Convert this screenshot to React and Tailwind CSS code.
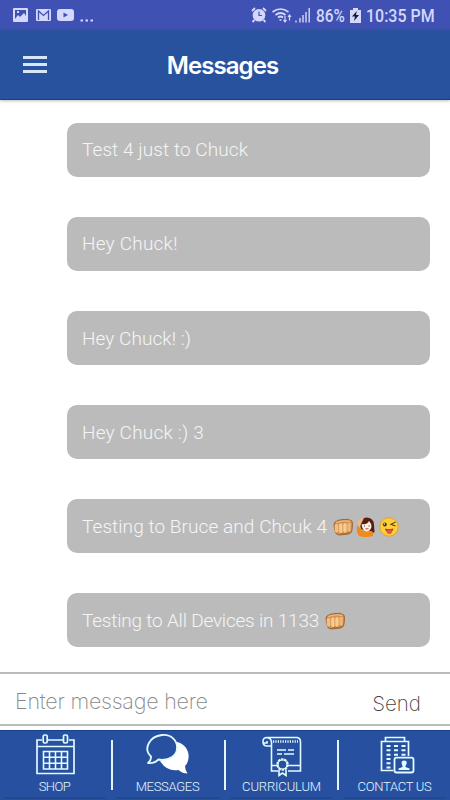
const messages = [
  { text: "Test 4 just to Chuck", tracking: "tracking-[0.08px]" },
  { text: "Hey Chuck!", tracking: "tracking-[0.22px]" },
  { text: "Hey Chuck! :)", tracking: "tracking-[0.06px]" },
  { text: "Hey Chuck :) 3", tracking: "tracking-[0.2px]" },
  { text: "Testing to Bruce and Chcuk 4", tracking: "tracking-[0.07px]", emojis: ["fist", "hand", "wink"] },
  { text: "Testing to All Devices in 1133", tracking: "tracking-[-0.2px]", emojis: ["fist"] },
];

function FistEmoji() {
  return (
    <svg className="h-[22px] w-[22px]" viewBox="0 0 22 22">
      <path d="M2 9Q2 5.500 5 5Q7 3.500 9 4Q11 3 13 3.700Q16 2.500 17.500 4Q20.500 4 20.500 7.500L20 14Q19.500 17.500 16.500 18L7 19Q4 19 3 15Z" fill="#d19354" stroke="#96592a" strokeWidth=".9" />
      <rect x="2.700" y="8" width="3.600" height="8.500" rx="1.700" fill="#f3c081" />
      <rect x="7.100" y="7.300" width="3.400" height="9.700" rx="1.700" fill="#f7ca8d" />
      <rect x="11.300" y="7" width="3.400" height="9.800" rx="1.700" fill="#f7ca8d" />
      <rect x="15.500" y="6.700" width="3.200" height="9" rx="1.600" fill="#f0b978" />
      <path d="M4 6.700Q11 4 18.500 5.500" fill="none" stroke="#efb87a" strokeWidth="1.300" />
      <path d="M8 17.800Q14 18 18 16" fill="none" stroke="#a96c33" strokeWidth=".8" />
    </svg>
  );
}

function HandEmoji() {
  return (
    <svg className="h-[22px] w-[22px]" viewBox="0 0 22 22">
      <path d="M5 8Q5 1.500 12 1.500Q19 2 19 9L19.500 16Q17 18 14 16L6 13Z" fill="#571c13" />
      <path d="M2 9L5 12L8 15L17 15Q19 17 18 20Q11 22 4 20Q1 16 2 9Z" fill="#f28a16" />
      <path d="M6.500 8Q12 9 14 5Q17 8 16.500 11Q15 15.500 11.500 15.500Q7 14.500 6.500 8Z" fill="#fff0df" />
      <path d="M3 5Q5 2 9 2L7 6L5 10L2.500 9Z" fill="#efb886" />
      <path d="M9 10h1M13.500 10h1" stroke="#35201b" strokeWidth="1.200" />
      <path d="M10.500 12.800h3" stroke="#c43d35" strokeWidth="1" />
    </svg>
  );
}

function WinkEmoji() {
  return (
    <svg className="h-[22px] w-[22px]" viewBox="0 0 22 22">
      <circle cx="11" cy="11" r="9.200" fill="#fdd03a" stroke="#e79b1c" strokeWidth=".9" />
      <circle cx="6.800" cy="8.500" r="2" fill="#503214" />
      <circle cx="6.300" cy="8" r=".7" fill="#fff" />
      <path d="M17.500 6L13 8.300L17.500 10" fill="none" stroke="#654018" strokeWidth="1.100" />
      <path d="M7 12.500Q11 14 15.500 12.500Q15 16 11 16Q7.500 16 7 12.500Z" fill="#a5381f" />
      <path d="M8.800 13.800h5v3q-2.500 2.500-5 0Z" fill="#ef4b4b" />
    </svg>
  );
}

const emojiIcons = { fist: FistEmoji, hand: HandEmoji, wink: WinkEmoji };

function StatusBar() {
  return (
    <div className="flex h-[30px] shrink-0 items-center justify-between bg-[#4051b4] pl-[13px] pr-[14px] text-[#d3d8fc]">
      <div className="flex items-center">
        <svg className="h-4 w-[15px]" viewBox="0 0 15 16">
          <path fillRule="evenodd" fill="currentColor" d="M1 1h13q1 0 1 1v12q0 1-1 1H1q-1 0-1-1V2q0-1 1-1ZM2 3v9l3-4 2 2 4-4 2 3V3ZM4 4h2v2H4Z" />
        </svg>
        <svg className="ml-2 h-4 w-[15px]" viewBox="0 0 15 16">
          <rect y="2" width="15" height="12" rx="1" fill="currentColor" />
          <path d="M2.500 13V4l5 4.500 5-4.500v9" fill="none" stroke="#4051b4" strokeWidth="1.300" />
        </svg>
        <svg className="ml-[6px] h-4 w-[17px]" viewBox="0 0 17 16">
          <rect y="2" width="17" height="12" rx="3" fill="currentColor" />
          <path d="M6.500 5.500v5L11 8Z" fill="#4051b4" />
        </svg>
        <svg className="ml-[6px] h-4 w-[15px]" viewBox="0 0 15 16">
          <path d="M.5 13.500h2.500M5.500 13.500h2.500M10.500 13.500h2.500" stroke="currentColor" strokeWidth="2.200" />
        </svg>
      </div>
      <div className="flex items-center">
        <svg className="h-4 w-4" viewBox="0 0 16 16">
          <circle cx="8" cy="8.300" r="6.300" fill="currentColor" />
          <path d="M1 4l3-3M12 1l3 3M3.500 13l-2 2M12.500 13l2 2" stroke="currentColor" strokeWidth="1.800" />
          <path d="M8 4.500V8.500h3" fill="none" stroke="#4051b4" strokeWidth="1.200" />
        </svg>
        <svg className="ml-[5px] h-4 w-[21px]" viewBox="0 0 20 16" fill="none" stroke="currentColor" strokeWidth="1.700">
          <path d="M0 5Q8-1 16 5M3 8Q8 4 13 8M5.500 10.500Q8 8.500 10.500 10.500M7 13h2" />
          <path d="M12.500 9v6M11 13l1.500 2 1.500-2M17 13.500V8M15.500 10L17 8l1.500 2" strokeWidth="1.200" />
        </svg>
        <svg className="ml-[2px] h-4 w-[15px]" viewBox="0 0 15 16" stroke="currentColor" strokeWidth="1.400">
          <path d="M1 13.500v2M5 11v4.500M8 8v7.500M11 5v10.500M14.200 1v14.500" />
        </svg>
        <span className="ml-[6px] w-[30px] origin-left scale-x-[0.81] pt-px text-[19px] leading-[30px] font-medium whitespace-nowrap">86%</span>
        <svg className="ml-[4px] h-[17px] w-[11px]" viewBox="0 0 11 17">
          <path d="M3 1h5v2h3v13H0V3h3Z" fill="currentColor" />
          <path d="M6.800 4L2 9.500h3L4 14l5-6H6Z" fill="#151a3b" />
        </svg>
        <span className="ml-[5px] w-[70px] origin-left scale-x-[0.84] pt-px text-[19px] leading-[30px] font-medium whitespace-nowrap">10:35 PM</span>
      </div>
    </div>
  );
}

function ShopIcon() {
  return (
    <svg className="h-[44px] w-[44px]" viewBox="0 0 44 44" fill="none" stroke="#e2fbff" strokeWidth="1.700">
      <path d="M9 7H4v33.500h37V7h-5M15 7h15M4 13.500h37" />
      <rect x="10.200" y="2" width="4" height="8" rx="1.500" />
      <rect x="30.500" y="2" width="4" height="8" rx="1.500" />
      <path d="M10.500 18.500h24v17.500h-24ZM16.500 18.500v17.500M22.500 18.500v17.500M28.500 18.500v17.500M10.500 24.300h24M10.500 30.200h24" strokeWidth="1.600" />
    </svg>
  );
}

function MessagesIcon() {
  return (
    <svg className="h-[44px] w-[44px]" viewBox="0 0 44 44">
      <path d="M31 9C39 11 43.500 18 42.500 25Q42 30.500 39 33Q39 37 41.500 40.500Q36.500 40.500 32.500 37Q21 39 14 28Z" fill="#fff" />
      <path d="M16 2C25 1 31.500 7.500 31 15C31 23 23 28 12.500 26.500Q8 31 2 30Q5.500 27 5 23.500C-3 16 3 3.500 16 2Z" fill="#2751a0" stroke="#e2fbff" strokeWidth="1.800" strokeLinejoin="round" />
    </svg>
  );
}

function CurriculumIcon() {
  return (
    <svg className="h-[44px] w-[44px]" viewBox="0 0 44 44" fill="none" stroke="#e2fbff" strokeWidth="1.600">
      <path d="M7 4.500H37Q40.500 5 40.500 9V38H28M18 38H11.500V13M7 4.500Q3 4.500 3 8.500Q3 13 7 13H11.500V9Q11 5 7 4.500M3.500 10H7V8" />
      <path d="M13 8.500h25" strokeWidth="2.500" strokeDasharray="1.200 1.200" />
      <path d="M17 17h9M28 17h6M17 21h5M24 21h10M11.500 32.500h6M28 32.500h12" />
      <path d="M19 36.500v6l3.500-2.500L26 42.500v-6" />
      <circle cx="22.500" cy="31.500" r="5.200" strokeWidth="2" strokeDasharray="2.500 .7" />
      <circle cx="22.500" cy="31.500" r="4.500" strokeWidth="1.200" />
    </svg>
  );
}

function ContactIcon() {
  return (
    <svg className="h-[44px] w-[44px]" viewBox="0 0 44 44" fill="none" stroke="#e2fbff" strokeWidth="1.700">
      <path d="M20.500 37.500H8.500V8.500H35.500V23M12.500 8.500V4.500H31.500V8.500" />
      <path d="M13.500 13h19M13.500 17.300h19M13.500 21.700h19" strokeWidth="1.900" strokeDasharray="4 3.500" />
      <path d="M13.500 26h4M13.500 30.200h4M13.500 34.500h4" strokeWidth="1.900" />
      <rect x="21.500" y="24.700" width="19" height="14.800" rx="2" fill="#2751a0" strokeWidth="1.800" />
      <path d="M31 27.500Q34.500 27.500 33.500 31L32.500 33V34L36.500 35.500V37H25.500V35.500L29.500 34V33Q27 27.500 31 27.500Z" fill="#e2fbff" stroke="none" />
    </svg>
  );
}

const tabs = [
  { label: "SHOP", Icon: ShopIcon, text: "tracking-[-0.5px]", pad: "pr-[4px]" },
  { label: "MESSAGES", Icon: MessagesIcon, text: "tracking-[-0.3px]", pad: "pr-[4px]" },
  { label: "CURRICULUM", Icon: CurriculumIcon, text: "tracking-[-0.15px]", pad: "pr-[2px]" },
  { label: "CONTACT US", Icon: ContactIcon, text: "tracking-[-0.3px]", pad: "pr-[2px]" },
];

export default function App() {
  return (
    <div className="flex h-[800px] w-[450px] flex-col overflow-hidden bg-white font-['Roboto',sans-serif]">
      <StatusBar />
      <header className="relative z-10 grid h-[70px] shrink-0 grid-cols-[1fr_auto_1fr] items-center border-b border-[#173e86] bg-[#28529e] shadow-[0_1px_3px_#0004]">
        <button className="ml-[23px] flex w-6 flex-col gap-[4px]">
          <span className="h-[3px] w-6 bg-[#d4e6f8]" />
          <span className="h-[3px] w-6 bg-[#d4e6f8]" />
          <span className="h-[3px] w-6 bg-[#d4e6f8]" />
        </button>
        <h1 className="pt-[2px] pr-[5px] font-['Inter',sans-serif] text-[24px] leading-8 font-semibold tracking-[-0.95px] text-white">Messages</h1>
      </header>

      <main className="flex h-[572px] shrink-0 flex-col gap-[40.2px] pt-[22.500px] pr-5 pl-[67px]">
        {messages.map((m) => (
          <div key={m.text} className="flex h-[54px] shrink-0 items-center rounded-[10px] bg-[#bbb] pl-[15px]">
            <span className={`pt-[2px] font-['Roboto',sans-serif] text-[19px] font-light whitespace-pre text-white/85 ${m.tracking}`}>{m.text}</span>
            {m.emojis && (
              <div className="ml-[5px] flex gap-[1px] pt-px">
                {m.emojis.map((name) => {
                  const Emoji = emojiIcons[name];
                  return <Emoji key={name} />;
                })}
              </div>
            )}
          </div>
        ))}
      </main>

      <div className="flex h-[54px] shrink-0 items-center justify-between border-t-[2px] border-b-[2px] border-[#bcbcbc] bg-white pr-[29px] pl-[15px]">
        <input
          type="text"
          placeholder="Enter message here"
          className="w-[250px] pt-[5px] font-['Inter',sans-serif] text-[21.500px] font-extralight tracking-[-0.22px] text-[#777] outline-none placeholder:text-[#888]"
        />
        <button className="pt-[10px] font-['Inter',sans-serif] text-[20.500px] font-extralight text-[#444]">Send</button>
      </div>

      <nav className="mt-1 flex h-[70px] shrink-0 border-t border-[#173e86] bg-[#2751a0]">
        {tabs.map(({ label, Icon, text, pad }, i) => (
          <div key={label} className={`relative flex w-[113px] shrink-0 flex-col items-center pt-[2px] ${pad}`}>
            <Icon />
            <span className={`mt-px font-['Roboto',sans-serif] text-[13px] leading-[18px] font-light whitespace-nowrap text-[#e2f6ff] ${text}`}>{label}</span>
            <span className="mt-px h-[2px] w-[103px] bg-[#234991]" />
            {i < 3 && <span className="absolute top-[9px] right-[0px] h-[50px] w-[2px] bg-[#e2f6ff]" />}
          </div>
        ))}
      </nav>
    </div>
  );
}
